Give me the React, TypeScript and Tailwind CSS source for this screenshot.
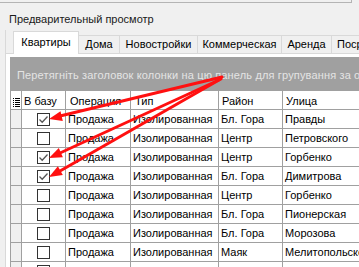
import React from "react";

const rows = [
  { c: true, r: "Бл. Гора", s: "Правды" },
  { c: false, r: "Центр", s: "Петровского" },
  { c: true, r: "Центр", s: "Горбенко" },
  { c: true, r: "Бл. Гора", s: "Димитрова" },
  { c: false, r: "Центр", s: "Горбенко" },
  { c: false, r: "Бл. Гора", s: "Пионерская" },
  { c: false, r: "Бл. Гора", s: "Морозова" },
  { c: false, r: "Маяк", s: "Мелитопольского" },
  { c: false, r: "", s: "", empty: true },
];

function CheckBox({ checked }: { checked: boolean }) {
  return (
    <div className="w-[13px] h-[13px] border border-[#333333] bg-white flex items-center justify-center">
      {checked && (
        <svg width="11" height="11" viewBox="0 0 11 11">
          <path d="M1.5 5.5 L4.2 8.2 L9.5 2.5" fill="none" stroke="#555555" strokeWidth="1.3" />
        </svg>
      )}
    </div>
  );
}

function ColIcon() {
  return (
    <svg width="7" height="9" viewBox="0 0 7 9">
      <rect x="0" y="0" width="1" height="1" fill="#000" />
      <rect x="0" y="2" width="1" height="1" fill="#000" />
      <rect x="0" y="4" width="1" height="1" fill="#000" />
      <rect x="0" y="6" width="1" height="1" fill="#000" />
      <rect x="0" y="8" width="1" height="1" fill="#000" />
      <rect x="2" y="0" width="5" height="1" fill="#000" />
      <rect x="2" y="2" width="5" height="1" fill="#000" />
      <rect x="2" y="4" width="5" height="1" fill="#000" />
      <rect x="2" y="6" width="5" height="1" fill="#000" />
      <rect x="2" y="8" width="5" height="1" fill="#000" />
    </svg>
  );
}

const tabs = [
  { t: "Дома", w: "w-[41px] justify-center" },
  { t: "Новостройки", w: "w-[78px] justify-center" },
  { t: "Коммерческая", w: "w-[84px] justify-center" },
  { t: "Аренда", w: "w-[50px] justify-center" },
  { t: "Посредники", w: "w-[72px] pl-[5px]" },
];

export default function App() {
  return (
    <div className="relative w-[359px] h-[267px] overflow-hidden bg-[#f0f0f0] font-['Liberation_Sans',Arial,sans-serif] text-[11px] leading-[13px] text-black">
      <div className="h-[3px] w-[352px] border-r border-b border-[#b4b4b4]" />
      <div className="h-[27px] pl-[9px] pt-[10px] text-[#1a1a1a] whitespace-nowrap">Предварительный просмотр</div>
      <div className="ml-[5px] border-l border-[#d9d9d9]">
        <div className="flex items-end h-[24px] border-b border-[#d9d9d9] pl-[7px]">
          <div className="w-[66px] shrink-0 h-[23px] -mb-px bg-white border-t border-l border-r border-[#d9d9d9] flex items-center justify-center pb-[1px] whitespace-nowrap">
            Квартиры
          </div>
          {tabs.map((tb) => (
            <div
              key={tb.t}
              className={`${tb.w} shrink-0 h-[18px] border-t border-r border-[#d9d9d9] flex items-center whitespace-nowrap overflow-hidden`}
            >
              {tb.t}
            </div>
          ))}
        </div>
        <div className="bg-white pl-[4px] pt-[3px]">
          <div className="border-l border-[#a0a0a0]">
            <div className="h-[34px] bg-[#a0a0a0] pl-[6px] pt-[3px] flex items-center text-[#e4e4e4] whitespace-nowrap overflow-hidden tracking-[0.15px]">
              Перетягніть заголовок колонки на цю панель для групування за ознакою
            </div>
            <div className="flex h-[19px] border-b border-[#a0a0a0] bg-white">
              <div className="w-[11px] shrink-0 border-r border-[#a0a0a0] flex items-center justify-center pt-[4px]">
                <ColIcon />
              </div>
              <div className="w-[44px] shrink-0 border-r border-[#a0a0a0] pl-[2px] pt-[3px] flex items-center">В базу</div>
              <div className="w-[65px] shrink-0 border-r border-[#a0a0a0] pl-[4px] pt-[3px] flex items-center">Операция</div>
              <div className="w-[88px] shrink-0 border-r border-[#a0a0a0] pl-[4px] pt-[3px] flex items-center">Тип</div>
              <div className="w-[64px] shrink-0 border-r border-[#a0a0a0] pl-[3px] pt-[3px] flex items-center">Район</div>
              <div className="flex-1 pl-[3px] pt-[3px] flex items-center">Улица</div>
            </div>
            {rows.map((row, i) => (
              <div key={i} className="flex h-[19px] border-b border-[#a0a0a0] bg-white">
                <div className="w-[11px] shrink-0 border-r border-[#a0a0a0] bg-[#f0f0f0]" />
                <div className="w-[44px] shrink-0 border-r border-[#a0a0a0] flex items-start justify-center pt-[3px]">
                  <CheckBox checked={row.c} />
                </div>
                <div className="w-[65px] shrink-0 border-r border-[#a0a0a0] pl-[2px] pt-[1px] flex items-center whitespace-nowrap overflow-hidden">
                  {row.empty ? "" : "Продажа"}
                </div>
                <div className="w-[88px] shrink-0 border-r border-[#a0a0a0] pl-[2px] pt-[1px] flex items-center whitespace-nowrap overflow-hidden">
                  {row.empty ? "" : "Изолированная"}
                </div>
                <div className="w-[64px] shrink-0 border-r border-[#a0a0a0] pl-[2px] pt-[1px] flex items-center whitespace-nowrap overflow-hidden">
                  {row.r}
                </div>
                <div className="flex-1 pl-[2px] pt-[1px] flex items-center whitespace-nowrap overflow-hidden">{row.s}</div>
              </div>
            ))}
          </div>
        </div>
      </div>
      <svg className="absolute inset-0 pointer-events-none" width="359" height="267" viewBox="0 0 359 267">
        <g stroke="#ff1010" strokeWidth="3" strokeLinecap="round" fill="none">
          <line x1="222" y1="77" x2="60" y2="116" />
          <line x1="221" y1="79" x2="60" y2="153" />
          <line x1="219" y1="80" x2="60" y2="171" />
        </g>
        <g fill="#ff1010">
          <polygon points="49,119 62.8,120.9 60.5,111.2" />
          <polygon points="49,158 62.9,157.2 58.8,148.1" />
          <polygon points="49,177 62.8,175 57.9,166.3" />
        </g>
      </svg>
    </div>
  );
}
